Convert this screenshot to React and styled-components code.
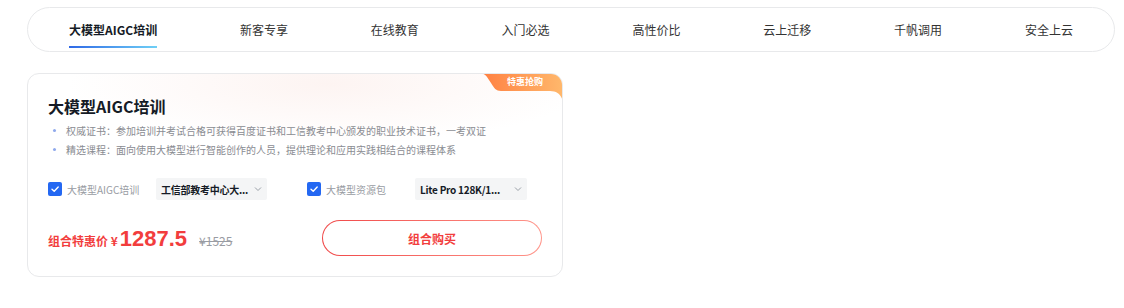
import React from "react";
import styled, { createGlobalStyle } from "styled-components";

const GlobalStyle = createGlobalStyle`
  html, body { margin: 0; padding: 0; background: #fff; }
  body {
    font-family: "Noto Sans CJK SC", "Liberation Sans", sans-serif;
    color: #151b26;
  }
  * { box-sizing: border-box; }
`;

const Page = styled.div`
  width: 1124px;
  padding: 7px 9px 0 27px;
  display: flex;
  flex-direction: column;
  gap: 21px;
`;

const Nav = styled.nav`
  height: 45px;
  border: 1px solid #e8e9eb;
  border-radius: 23px;
  background: #fff;
  display: flex;
  align-items: flex-start;
  justify-content: space-between;
  padding: 0 41px;
`;

const NavItem = styled.div`
  font-size: 12px;
  line-height: 17px;
  padding: 13px 0 10px;
  white-space: nowrap;
  color: ${(p) => (p.$active ? "#151b26" : "#333")};
  font-weight: ${(p) => (p.$active ? 600 : 400)};
  background: ${(p) =>
    p.$active
      ? "linear-gradient(90deg, #2f69e6, #6fd0f6) left bottom / 100% 2px no-repeat"
      : "none"};
`;

const Card = styled.section`
  position: relative;
  width: 536px;
  height: 204px;
  border: 1px solid #e8e9eb;
  border-radius: 12px;
  background: radial-gradient(ellipse 260px 60px at 300px 10px, #fdf4f2 0%, rgba(255, 255, 255, 0) 100%), #fff;
  padding: 20px 20px 0 20px;
  overflow: hidden;
`;

const Badge = styled.div`
  position: absolute;
  top: -1px;
  right: -1px;
  width: 86px;
  height: 32px;
`;

const BadgeText = styled.span`
  position: absolute;
  top: 3px;
  left: 30px;
  font-size: 9px;
  line-height: 12px;
  font-weight: 700;
  color: #fff;
`;

const Title = styled.h2`
  margin: 0;
  font-size: 16px;
  line-height: 24px;
  font-weight: 700;
  color: #151b26;
`;

const Points = styled.ul`
  margin: 3px 0 0;
  padding: 0;
  list-style: none;
`;

const Point = styled.li`
  display: flex;
  align-items: center;
  gap: 10px;
  font-size: 10px;
  line-height: 19px;
  color: #8a8c92;
  padding-left: 5px;
  &::before {
    content: "";
    width: 3px;
    height: 3px;
    border-radius: 50%;
    background: #8fa9ec;
    flex: none;
  }
`;

const Options = styled.div`
  margin-top: 19px;
  display: flex;
  gap: 40px;
  height: 22px;
`;

const Option = styled.label`
  display: flex;
  align-items: center;
  gap: 5px;
`;

const Check = styled.span`
  width: 14px;
  height: 14px;
  border-radius: 2px;
  background: #2468f2;
  display: flex;
  align-items: center;
  justify-content: center;
`;

const OptionLabel = styled.span`
  width: 84px;
  font-size: 10px;
  color: #999ca3;
  white-space: nowrap;
`;

const Select = styled.div`
  width: ${(p) => p.$w}px;
  height: 22px;
  background: #f4f5f6;
  border-radius: 2px;
  display: flex;
  align-items: center;
  justify-content: space-between;
  gap: 3px;
  padding: 0 5px 0 5px;
`;

const SelectText = styled.span`
  font-size: 10px;
  font-weight: 700;
  letter-spacing: -0.25px;
  color: #151b26;
  white-space: nowrap;
`;

const PriceRow = styled.div`
  margin-top: 20px;
  display: flex;
  align-items: center;
  justify-content: space-between;
`;

const Price = styled.div`
  display: flex;
  align-items: baseline;
  color: #f23d3d;
  font-weight: 700;
  padding-top: 2px;
`;

const PriceLabel = styled.span`
  font-size: 12px;
`;

const PriceValue = styled.span`
  font-family: "Liberation Sans", "Noto Sans CJK SC", sans-serif;
  font-size: 22px;
  margin-left: 2px;
`;

const OldPrice = styled.span`
  margin-left: 12px;
  font-size: 12px;
  font-weight: 400;
  color: #999ca3;
  text-decoration: line-through;
`;

const BuyButton = styled.button`
  width: 220px;
  height: 36px;
  border-radius: 18px;
  border: 1px solid transparent;
  background: linear-gradient(#fff, #fff) padding-box,
    linear-gradient(90deg, #f04848, #ff958a) border-box;
  color: #f23d3d;
  font-family: inherit;
  font-size: 12px;
  font-weight: 600;
  cursor: pointer;
`;

const Chevron = () => (
  <svg width="8" height="8" viewBox="0 0 8 8" fill="none" style={{ flex: "none" }}>
    <path d="M1 2.5 L4 5.5 L7 2.5" stroke="#9aa0a8" strokeWidth="1" />
  </svg>
);

const Tick = () => (
  <svg width="10" height="10" viewBox="0 0 10 10" fill="none">
    <path d="M2 5.2 L4.2 7.2 L8.2 3" stroke="#fff" strokeWidth="1.4" strokeLinecap="round" strokeLinejoin="round" />
  </svg>
);

const navItems = ["大模型AIGC培训", "新客专享", "在线教育", "入门必选", "高性价比", "云上迁移", "千帆调用", "安全上云"];

export default function App() {
  return (
    <>
      <GlobalStyle />
      <Page>
        <Nav>
          {navItems.map((t, i) => (
            <NavItem key={t} $active={i === 0}>{t}</NavItem>
          ))}
        </Nav>
        <Card>
          <Badge>
            <svg width="86" height="32" viewBox="0 0 86 32">
              <defs>
                <linearGradient id="bg" x1="0" y1="0" x2="1" y2="0">
                  <stop offset="0" stopColor="#ff7d3f" />
                  <stop offset="1" stopColor="#ffb86c" />
                </linearGradient>
              </defs>
              <path
                d="M0 0 H74 A12 12 0 0 1 86 12 V32 C86 23 81 18 73 18 H24 C19 18 17 15 14 10 L10 4 C8 1 5 0 0 0 Z"
                fill="url(#bg)"
              />
            </svg>
            <BadgeText>特惠抢购</BadgeText>
          </Badge>
          <Title>大模型AIGC培训</Title>
          <Points>
            <Point>权威证书：参加培训并考试合格可获得百度证书和工信教考中心颁发的职业技术证书，一考双证</Point>
            <Point>精选课程：面向使用大模型进行智能创作的人员，提供理论和应用实践相结合的课程体系</Point>
          </Points>
          <Options>
            <Option>
              <Check><Tick /></Check>
              <OptionLabel>大模型AIGC培训</OptionLabel>
              <Select $w={111}>
                <SelectText>工信部教考中心大...</SelectText>
                <Chevron />
              </Select>
            </Option>
            <Option>
              <Check><Tick /></Check>
              <OptionLabel>大模型资源包</OptionLabel>
              <Select $w={112}>
                <SelectText>Lite Pro 128K/1...</SelectText>
                <Chevron />
              </Select>
            </Option>
          </Options>
          <PriceRow>
            <Price>
              <PriceLabel>组合特惠价 ¥</PriceLabel>
              <PriceValue>1287.5</PriceValue>
              <OldPrice>¥1525</OldPrice>
            </Price>
            <BuyButton>组合购买</BuyButton>
          </PriceRow>
        </Card>
      </Page>
    </>
  );
}
